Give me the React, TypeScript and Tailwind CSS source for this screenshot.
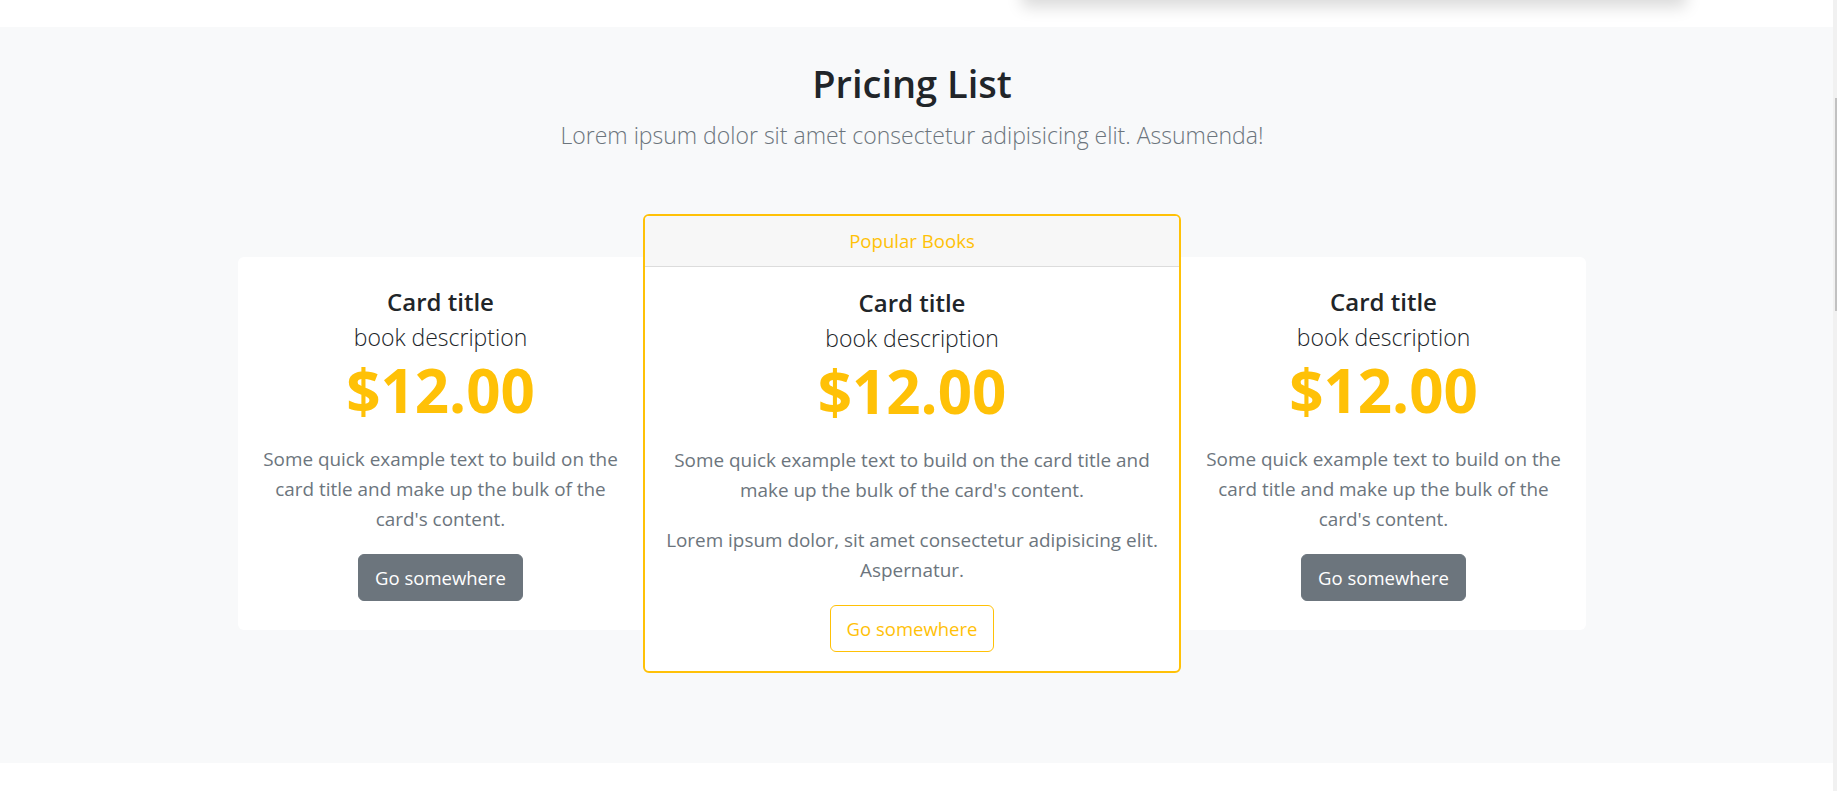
import React from 'react';

interface CardProps {
  featured?: boolean;
  side: 'left' | 'right';
}

function CardBody({ featured }: { featured?: boolean }) {
  return (
    <div className={`flex flex-col items-center px-4 text-center ${featured ? 'pt-[21px] pb-[19px]' : 'pt-[30px] pb-[29px]'}`}>
      <h4 className="text-[24px] leading-[29px] font-semibold text-[#212529]">Card title</h4>
      <p className="mt-[6px] text-[23px] leading-[30px] font-light text-[#212529]">book description</p>
      <p className="mt-[13px] text-[60px] leading-[50px] font-bold text-[#ffc107]">$12.00</p>
      <p className="mt-[29px] text-[18.9px] leading-[30px] text-[#6c757d]">
        Some quick example text to build on the card title and make up the bulk of the card's content.
      </p>
      {featured && (
        <p className="mt-[20px] text-[18.9px] leading-[30px] text-[#6c757d]">
          Lorem ipsum dolor, sit amet consectetur adipisicing elit. Aspernatur.
        </p>
      )}
      {featured ? (
        <button className="mt-[20px] rounded-[6px] border border-[#ffc107] px-[16px] py-[8px] text-[18.5px] leading-[29px] text-[#ffc107]">
          Go somewhere
        </button>
      ) : (
        <button className="mt-[20px] rounded-[6px] border border-[#6c757d] bg-[#6c757d] px-[16px] py-[8px] text-[18.5px] leading-[29px] text-white">
          Go somewhere
        </button>
      )}
    </div>
  );
}

function SideCard({ side }: CardProps) {
  return (
    <div className={`w-[405px] bg-white ${side === 'left' ? 'rounded-l-[6px]' : 'rounded-r-[6px]'}`}>
      <CardBody />
    </div>
  );
}

function FeaturedCard() {
  return (
    <div className="w-[538px] overflow-hidden rounded-[6px] border-2 border-[#ffc107] bg-white">
      <div className="border-b border-[#dcdcdc] bg-[#f7f7f7] py-[10px] text-center text-[18.6px] leading-[30px] text-[#ffc107]">
        Popular Books
      </div>
      <CardBody featured />
    </div>
  );
}

export default function App() {
  return (
    <div className="flex h-[791px] w-full overflow-hidden bg-white font-['Open_Sans',sans-serif]">
      <div className="flex min-w-0 flex-1 flex-col">
        {/* bottom of the previous section, scrolled out of view */}
        <div className="relative h-[27px] shrink-0 overflow-hidden bg-white">
          <div className="absolute left-[1022px] top-[-40px] h-[39px] w-[664px] bg-white shadow-[0_8px_16px_rgba(0,0,0,0.15)]" />
        </div>

        <section className="h-[736px] shrink-0 bg-[#f8f9fa] pr-[9px] pt-[34px]">
          <h2 className="text-center text-[38px] leading-[45px] font-semibold text-[#212529]">Pricing List</h2>
          <p className="mt-[13px] text-center text-[23px] leading-[32px] font-light text-[#6c757d]">
            Lorem ipsum dolor sit amet consectetur adipisicing elit. Assumenda!
          </p>

          <div className="mt-[63px] flex items-center justify-center">
            <SideCard side="left" />
            <FeaturedCard />
            <SideCard side="right" />
          </div>
        </section>

        <div className="flex-1 bg-white" />
      </div>

      <div className="w-[4px] shrink-0 bg-[#f1f1f1]">
        <div className="ml-[2px] mt-[98px] h-[213px] w-[2px] bg-[#c1c1c1]" />
      </div>
    </div>
  );
}
